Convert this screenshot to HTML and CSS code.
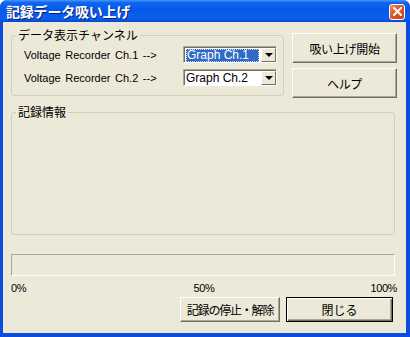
FILE: index.html
```html
<!DOCTYPE html>
<html lang="ja">
<head>
    <meta charset="UTF-8">
    <meta name="viewport" content="width=device-width, initial-scale=1.0">
    <title>記録データ吸い上げ</title>
    <link rel="stylesheet" href="styles.css">
</head>
<body>
    <div class="window">
        <!-- Barra de título -->
        <div class="titlebar">
            <span class="title">記録データ吸い上げ</span>
            <button class="close-btn" title="閉じる">
                <svg width="9" height="9" viewBox="0 0 9 9">
                    <path d="M1 1 L8 8 M8 1 L1 8" stroke="#fff" stroke-width="2" stroke-linecap="square"/>
                </svg>
            </button>
        </div>

        <div class="client">
            <div class="top">
                <fieldset class="group channel-group">
                    <legend>データ表示チャンネル</legend>
                    <div class="rows">
                        <div class="row">
                            <span class="row-label">Voltage Recorder Ch.1 --&gt;</span>
                            <div class="combo">
                                <span class="combo-text"><span class="selected">Graph Ch.1</span></span>
                                <span class="combo-btn"><span class="arrow"></span></span>
                            </div>
                        </div>
                        <div class="row">
                            <span class="row-label">Voltage Recorder Ch.2 --&gt;</span>
                            <div class="combo">
                                <span class="combo-text">Graph Ch.2</span>
                                <span class="combo-btn"><span class="arrow"></span></span>
                            </div>
                        </div>
                    </div>
                </fieldset>

                <div class="side-buttons">
                    <button class="btn tall">吸い上げ開始</button>
                    <button class="btn tall">ヘルプ</button>
                </div>
            </div>

            <fieldset class="group info-group">
                <legend>記録情報</legend>
            </fieldset>

            <div class="progress"></div>
            <div class="scale">
                <span class="scale-start">0%</span>
                <span class="scale-mid">50%</span>
                <span class="scale-end">100%</span>
            </div>

            <div class="bottom-buttons">
                <button class="btn stop-btn">記録の停止・解除</button>
                <button class="btn default close-main">閉じる</button>
            </div>
        </div>
    </div>
</body>
</html>
```

FILE: styles.css
```css
/* Ventana estilo Windows XP */
body {
    margin: 0;
    padding: 0;
    background: #fff;
    font-family: "Noto Sans CJK JP", "Liberation Sans", sans-serif;
    font-size: 12px;
}

.window {
    width: 410px;
    height: 337px;
    display: flex;
    flex-direction: column;
    box-sizing: border-box;
    background: #0A4DDF;
    border-radius: 7px 7px 0 0;
    overflow: hidden;
}

.titlebar {
    height: 22px;
    flex: none;
    display: flex;
    align-items: center;
    justify-content: space-between;
    padding: 0 5px 0 6px;
    background: linear-gradient(to bottom, #4A96FA 0%, #0F66F0 12%, #0558E8 45%, #0A60EE 85%, #0448D0 100%);
}

.title {
    color: #fff;
    font-weight: bold;
    font-size: 14px;
    line-height: 16px;
    letter-spacing: -0.2px;
    text-shadow: 1px 1px 0 #0A1E7A;
}

.close-btn {
    width: 16px;
    height: 16px;
    padding: 0;
    margin-top: 1px;
    border: 1px solid #fff;
    border-radius: 3px;
    background: linear-gradient(135deg, #F08A6A 0%, #E0532B 45%, #C8401A 100%);
    display: flex;
    align-items: center;
    justify-content: center;
}

.client {
    flex: 1;
    margin: 0 4px 4px 3px;
    background: #ECE9D8;
    padding: 6px 9px 0 8px;
    display: flex;
    flex-direction: column;
}

.top {
    display: flex;
    align-items: flex-start;
    gap: 8px;
}

.group {
    margin: 0;
    border: 1px solid #D0D0BF;
    border-radius: 3px;
    padding: 0 6px 0 4px;
    box-sizing: border-box;
}

.group legend {
    padding: 0 2px;
    line-height: 14px;
    font-size: 12px;
    color: #000;
}

.channel-group {
    width: 273px;
    padding-top: 4px;
    padding-bottom: 9px;
}

.rows {
    display: flex;
    flex-direction: column;
    gap: 6px;
    padding-left: 8px;
}

.row {
    display: flex;
    align-items: center;
    justify-content: space-between;
    height: 17px;
}

.row-label {
    font-family: "Liberation Sans", sans-serif;
    font-size: 11px;
    word-spacing: 1.5px;
}

.combo {
    width: 94px;
    height: 17px;
    box-sizing: border-box;
    display: flex;
    background: #fff;
    border: 1px solid;
    border-color: #ACA899 #fff #fff #ACA899;
    box-shadow: inset 1px 1px 0 #716F64;
    padding: 1px 0 0 1px;
}

.combo-text {
    flex: 1;
    display: flex;
    align-items: center;
    font-family: "Liberation Sans", sans-serif;
    font-size: 12px;
    padding-left: 1px;
}

.selected {
    display: block;
    width: 72px;
    height: 13px;
    line-height: 13px;
    background: #316AC5;
    color: #fff;
    outline: 1px dotted #C8D4F0;
    outline-offset: -1px;
    padding-left: 1px;
}

.combo-btn {
    width: 15px;
    box-sizing: border-box;
    background: #ECE9D8;
    border: 1px solid;
    border-color: #fff #716F64 #716F64 #fff;
    display: flex;
    align-items: center;
    justify-content: center;
}

.arrow {
    width: 0;
    height: 0;
    border-left: 4px solid transparent;
    border-right: 4px solid transparent;
    border-top: 4px solid #000;
}

.side-buttons {
    margin-top: 5px;
    display: flex;
    flex-direction: column;
    gap: 5px;
}

.btn {
    font-family: "Noto Sans CJK JP", sans-serif;
    font-size: 12px;
    color: #000;
    background: #ECE9D8;
    border: 1px solid;
    border-color: #fff #716F64 #716F64 #fff;
    box-shadow: inset -1px -1px 0 #ACA899;
    padding: 0;
    box-sizing: border-box;
}

.btn.tall {
    width: 105px;
    height: 30px;
    letter-spacing: -0.3px;
}

.info-group {
    margin-top: 7px;
    width: 384px;
    height: 130px;
}

.progress {
    margin-top: 19px;
    width: 384px;
    height: 22px;
    box-sizing: border-box;
    border: 1px solid;
    border-color: #ACA899 #fff #fff #ACA899;
}

.scale {
    margin-top: 5px;
    display: grid;
    grid-template-columns: 1fr auto 1fr;
    font-family: "Liberation Sans", sans-serif;
    font-size: 11px;
    line-height: 14px;
    letter-spacing: -0.4px;
}

.scale-end {
    justify-self: end;
}

.bottom-buttons {
    margin-top: 2px;
    margin-right: 4px;
    display: flex;
    justify-content: flex-end;
    gap: 6px;
}

.stop-btn {
    width: 100px;
    height: 25px;
    letter-spacing: -1.2px;
}

.btn.default {
    width: 107px;
    height: 25px;
    border: 1px solid #000;
    box-shadow: inset 1px 1px 0 #fff, inset -1px -1px 0 #716F64, inset -2px -2px 0 #ACA899;
}
```
